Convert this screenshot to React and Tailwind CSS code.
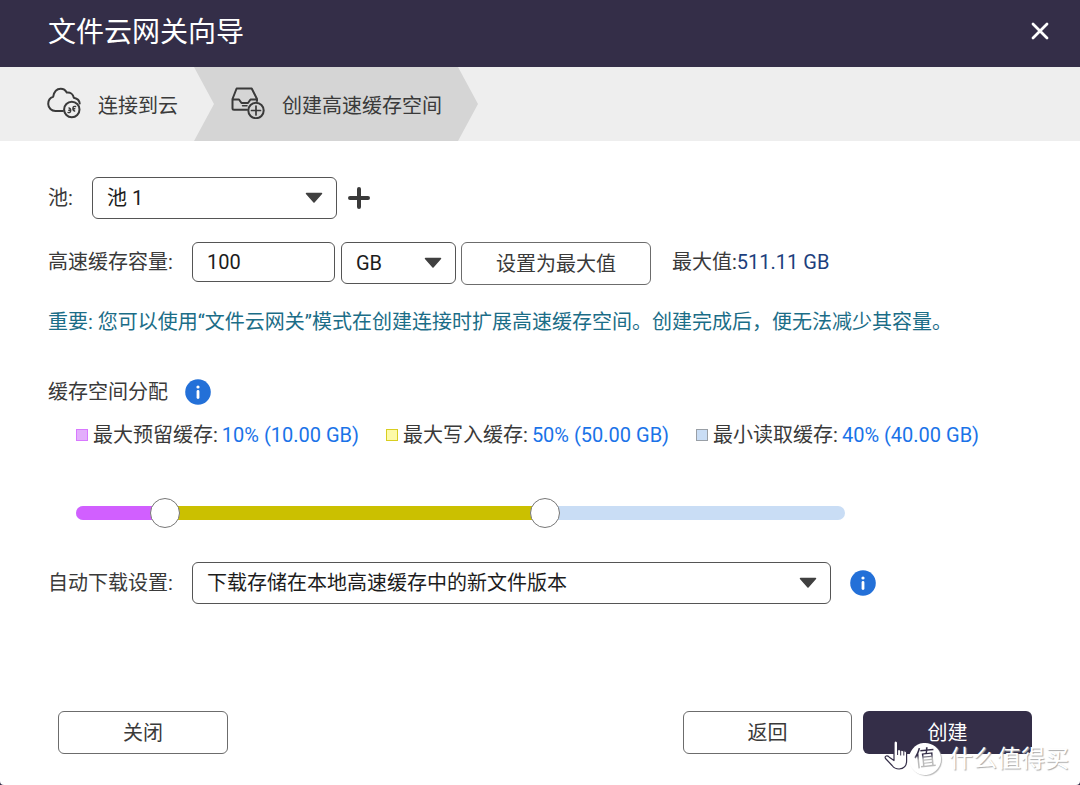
import { useState } from "react";

const stroke = { fill: "none", stroke: "currentColor", strokeLinecap: "round", strokeLinejoin: "round" };

function CloudLinkIcon() {
  return (
    <svg viewBox="0 0 34 32" className="h-8 w-[34px] shrink-0" {...stroke} strokeWidth="2" aria-hidden="true">
      <path d="M16 24H8.500A7.200 7.200 0 0 1 1.200 17C1.200 13 3.500 10.500 6.200 9.700C7 5 9.500 1.700 13.700 1.700C16.500 1.700 18.500 3 19.800 5.600C23.500 5.200 26.200 7.500 26.800 10.700C30.500 11.500 32.500 13.500 32.700 16.500" />
      <circle cx="24.800" cy="22.500" r="7.700" />
      <path strokeWidth="1.400" d="M21 25.500q2.500.5 2.700-1.800T22 21M21.800 23.300l1.500.2M28.600 19.500q-2.500-.5-2.700 1.800T27.600 24M27.800 21.700l-1.500-.2" />
    </svg>
  );
}

function TrayAddIcon() {
  return (
    <svg viewBox="0 0 34 32" className="h-8 w-[34px] shrink-0" {...stroke} strokeWidth="2" aria-hidden="true">
      <path d="M16 22.800H3a1.500 1.500 0 0 1-1.500-1.500V12L5.600 1.500H20.700L26 12V14M1.500 12.500H8L10.500 16H17L19.500 12.500H26" />
      <path strokeWidth="1.500" d="M11.500 18.700H16" />
      <circle cx="25" cy="23.500" r="7.700" />
      <path strokeWidth="1.700" d="M25 19v9M20.500 23.500h9" />
    </svg>
  );
}

function InfoButton({ label }) {
  return (
    <button type="button" aria-label={label} className="shrink-0 rounded-full">
      <svg viewBox="0 0 26 26" className="block size-[26px]" aria-hidden="true">
        <circle cx="13" cy="13" r="12.800" fill="#2370d8" />
        <circle cx="13" cy="8" r="1.600" fill="#fff" />
        <path d="M13 12.500v6" stroke="#fff" strokeWidth="2.800" strokeLinecap="round" />
      </svg>
    </button>
  );
}

function Select({ id, label, options, className }) {
  return (
    <div className={`relative ${className}`}>
      <select
        id={id}
        aria-label={label}
        className="h-[42px] w-full appearance-none rounded-md border border-[#555] bg-white pr-10 pl-[14px] text-[#1c1c1c]"
      >
        {options.map((o) => (
          <option key={o}>{o}</option>
        ))}
      </select>
      <svg viewBox="0 0 18 12" className="pointer-events-none absolute top-[15px] right-[14px] h-3 w-[18px]" aria-hidden="true">
        <path d="M1.500 1.500h15L9 10z" fill="#404040" stroke="#404040" strokeWidth="1.500" strokeLinejoin="round" />
      </svg>
    </div>
  );
}

const legend = [
  { name: "最大预留缓存:", value: "10% (10.00 GB)", swatch: "border-[#d878ff] bg-[#e3aefc]" },
  { name: "最大写入缓存:", value: "50% (50.00 GB)", swatch: "border-[#d8ce20] bg-[#fdfaa8]" },
  { name: "最小读取缓存:", value: "40% (40.00 GB)", swatch: "border-[#999fa6] bg-[#c9ddf5]" },
];

const rangeClass =
  "pointer-events-none absolute inset-0 h-[30px] w-full appearance-none bg-transparent [&::-webkit-slider-thumb]:pointer-events-auto [&::-webkit-slider-thumb]:size-[30px] [&::-webkit-slider-thumb]:appearance-none [&::-webkit-slider-thumb]:rounded-full [&::-webkit-slider-thumb]:border [&::-webkit-slider-thumb]:border-solid [&::-webkit-slider-thumb]:border-[#777] [&::-webkit-slider-thumb]:bg-white";

function CacheSlider() {
  const [reserve, setReserve] = useState(10);
  const [write, setWrite] = useState(61.5);
  return (
    <div className="relative flex h-[30px] w-full max-w-[769px] items-center">
      <div className="flex h-[14px] w-full overflow-hidden rounded-full bg-[#c9ddf5]">
        <div className="bg-[#d15fff]" style={{ width: `${reserve}%` }} />
        <div className="bg-[#cbc000]" style={{ width: `${write - reserve}%` }} />
      </div>
      <input
        type="range"
        step="0.5"
        aria-label="最大预留缓存"
        value={reserve}
        onChange={(e) => setReserve(Math.min(Number(e.target.value), write))}
        className={rangeClass}
      />
      <input
        type="range"
        step="0.5"
        aria-label="最大写入缓存"
        value={write}
        onChange={(e) => setWrite(Math.max(Number(e.target.value), reserve))}
        className={rangeClass}
      />
    </div>
  );
}

const buttonClass = "h-[43px] rounded-md border border-[#6c6c6c] bg-white";

export default function App() {
  return (
    <div className="bg-[#342e48] font-[Roboto,'Noto_Sans_CJK_SC',sans-serif] text-[20px] leading-[30px] text-[#3a3a3a]">
      <div className="relative flex min-h-screen flex-col overflow-hidden rounded-b bg-white">
        <header className="flex h-[67px] items-center justify-between bg-[#342e48] pr-[31px] pb-[6px] pl-12 text-white">
          <h1 className="pt-1 text-[28px] leading-10">文件云网关向导</h1>
          <button type="button" aria-label="关闭窗口">
            <svg viewBox="0 0 18 18" className="block size-[18px]" {...stroke} strokeWidth="2.800" aria-hidden="true">
              <path d="M2 2l14 14M16 2L2 16" />
            </svg>
          </button>
        </header>

        <ol className="flex h-[74px] bg-[#eee]">
          <li className="flex items-center gap-[17px] pr-4 pb-[2px] pl-[47px]">
            <CloudLinkIcon />
            <span className="pt-[6px]">连接到云</span>
          </li>
          <li
            aria-current="step"
            className="flex items-center gap-[17px] bg-[#d5d5d5] pr-9 pb-[2px] pl-[37px] [clip-path:polygon(0_0,calc(100%-20px)_0,100%_50%,calc(100%-20px)_100%,0_100%,20px_50%)]"
          >
            <TrayAddIcon />
            <span className="pt-[6px]">创建高速缓存空间</span>
          </li>
        </ol>

        <main className="flex flex-1 flex-col px-12 pt-9">
          <div className="flex items-center">
            <label htmlFor="pool" className="w-11">池:</label>
            <Select id="pool" options={["池 1"]} className="w-[245px]" />
            <button type="button" aria-label="添加池" className="ml-[11px]">
              <svg viewBox="0 0 22 22" className="block size-[22px]" {...stroke} strokeWidth="4" aria-hidden="true">
                <path d="M11 2v18M2 11h18" />
              </svg>
            </button>
          </div>

          <div className="mt-[23px] flex items-start">
            <label htmlFor="capacity" className="mt-[5px] w-36">高速缓存容量:</label>
            <input
              id="capacity"
              type="text"
              defaultValue="100"
              className="h-10 w-[143px] rounded-md border border-[#555] px-[14px] text-[#1c1c1c]"
            />
            <Select label="单位" options={["GB"]} className="ml-[6px] w-[115px]" />
            <button type="button" className={`${buttonClass} ml-[5px] w-[190px]`}>设置为最大值</button>
            <span className="mt-[5px] ml-[21px]">
              最大值:<span className="text-[#1d3f7d]">511.11 GB</span>
            </span>
          </div>

          <p className="mt-[22px] text-[#1b6d87]">
            重要: 您可以使用“文件云网关”模式在创建连接时扩展高速缓存空间。创建完成后，便无法减少其容量。
          </p>

          <div className="mt-10 flex items-center gap-[17px]">
            <h2>缓存空间分配</h2>
            <InfoButton label="缓存空间分配说明" />
          </div>

          <div className="pl-7">
            <ul className="mt-[13px] flex gap-[27px]">
              {legend.map((item) => (
                <li key={item.name} className="flex items-center whitespace-nowrap">
                  <span className={`mr-[5px] size-3 border ${item.swatch}`} />
                  {item.name}
                  <span className="ml-1 text-[#1a73e8]">{item.value}</span>
                </li>
              ))}
            </ul>
            <div className="mt-12">
              <CacheSlider />
            </div>
          </div>

          <div className="mt-[34px] flex items-center">
            <label htmlFor="download" className="w-36 shrink-0">自动下载设置:</label>
            <Select id="download" options={["下载存储在本地高速缓存中的新文件版本"]} className="w-full max-w-[639px]" />
            <div className="ml-[19px] flex">
              <InfoButton label="自动下载设置说明" />
            </div>
          </div>
        </main>

        <footer className="flex gap-[11px] pr-12 pb-[31px] pl-[58px]">
          <button type="button" className={`${buttonClass} mr-auto w-[170px]`}>关闭</button>
          <button type="button" className={`${buttonClass} w-[169px]`}>返回</button>
          <button type="button" className="h-[43px] w-[169px] rounded-md bg-[#342e48] text-white">创建</button>
        </footer>

        <div className="pointer-events-none absolute right-[11px] bottom-2 flex items-center gap-2">
          <span className="flex size-8 -rotate-6 items-center justify-center rounded-full bg-white text-[22px] [box-shadow:1px_1px_1px_#bbb]">
            <span className="bg-linear-to-b from-[#342e48] from-35% to-[#bbb] to-50% bg-clip-text text-transparent">值</span>
          </span>
          <span className="text-[24px] leading-9 text-white [text-shadow:1px_1px_1px_#aaa]">什么值得买</span>
        </div>
        <svg viewBox="0 0 24 30" className="pointer-events-none absolute right-[172px] bottom-[15px] h-[30px] w-6" aria-hidden="true">
          <path
            d="M10 20.500V2.800a1.800 1.800 0 0 1 3.600 0V10q1.500-1.500 3 .5 1.700-1.200 3 .6 2-.8 3 1.200V21q0 7.500-7.500 8-4.500 0-7-3.500L1.500 18.500q-1-2 .8-2.500 1.500-.3 3 1.200z"
            fill="#fff"
            stroke="#342e48"
            strokeWidth="1.200"
            strokeLinejoin="round"
          />
          <path d="M13.600 10v5M16.700 10.500v5M19.800 11.500v4" stroke="#342e48" strokeWidth="1" />
        </svg>
      </div>
    </div>
  );
}
